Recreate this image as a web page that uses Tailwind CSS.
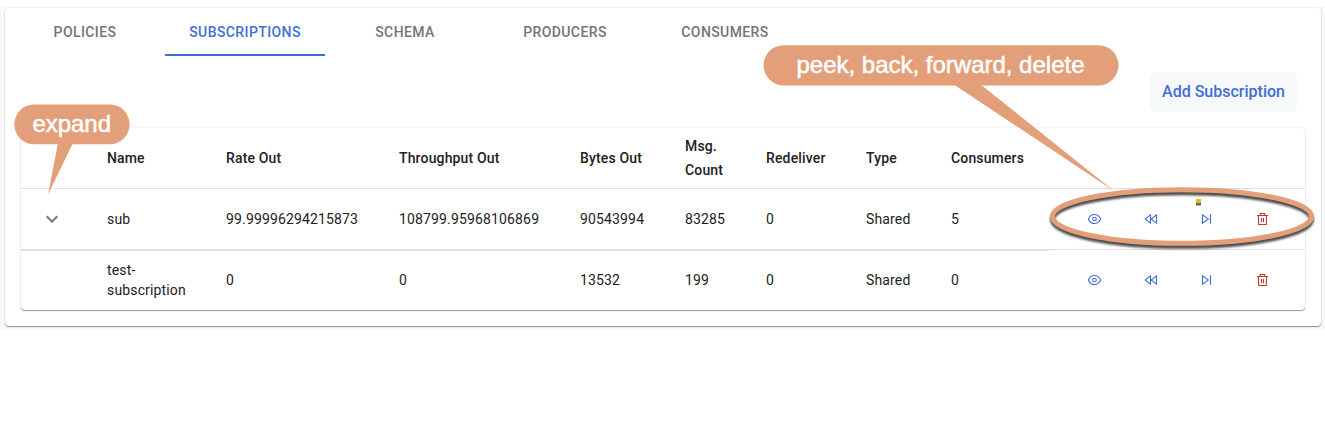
<!DOCTYPE html>
<html lang="en">
<head>
<meta charset="utf-8">
<title>Subscriptions</title>
<script src="https://cdn.jsdelivr.net/npm/@tailwindcss/browser@4"></script>
</head>
<body class="bg-white font-['Roboto',sans-serif] text-[#212121]">
<svg class="hidden">
  <symbol id="eye" viewBox="0 0 14 14"><path d="M.3 7C3.2 1 9.8 1 12.7 7C9.8 13 3.2 13 .3 7Z"/><circle cx="6.500" cy="7" r="1.800"/></symbol>
  <symbol id="back" viewBox="0 0 14 14"><path d="M6.5 2.8V11.2L1.2 7ZM12.5 2.8V11.2L7.2 7Z"/></symbol>
  <symbol id="next" viewBox="0 0 14 14"><path d="M2.5 2.8V11.2L8.4 7ZM10.5 2.3V11.7"/></symbol>
  <symbol id="trash" viewBox="0 0 14 14"><path d="M1 3.5H12M4.2 3.5V1.5H8.8V3.5M2.4 3.5L2.7 12.5H10.3L10.6 3.5M5.5 6V10.2M7.5 6V10.2"/></symbol>
</svg>
<div class="relative h-[423px] w-[1325px] overflow-hidden pt-[7px]">
  <div class="h-[323px] bg-[#f7f8fa] pt-px pr-1 pl-[5px]">
    <main class="h-[318px] rounded bg-white px-4 shadow-[0_1px_1px_rgba(0,0,0,0.4),0_0_2px_rgba(0,0,0,0.14)]">
      <nav class="-mx-4 flex h-12 text-center text-[14px] leading-[48px] font-medium tracking-[0.4px] text-[#757575]">
        <div class="w-40">POLICIES</div>
        <div class="w-40 border-b-2 border-[#3f6fd6] text-[#3f6fd6]">SUBSCRIPTIONS</div>
        <div class="w-40">SCHEMA</div>
        <div class="w-40">PRODUCERS</div>
        <div class="w-40">CONSUMERS</div>
      </nav>
      <div class="flex justify-end pt-4 pr-2 pb-4">
        <button class="h-10 w-[147px] rounded-md bg-[#f7f8fa] text-[16px] leading-10 font-medium text-[#3f6fd6]">Add Subscription</button>
      </div>
      <section class="h-[182px] rounded bg-white text-[14px] leading-5 tracking-[0.15px] shadow-[0_1px_1px_rgba(0,0,0,0.4),0_0_2px_rgba(0,0,0,0.12)]">
        <div class="grid h-[61px] grid-cols-[86px_119px_173px_181px_105px_81px_100px_85px_1fr] items-center border-b border-[#e0e0e0] leading-6 font-medium">
          <div></div><div>Name</div><div>Rate Out</div><div>Throughput Out</div><div>Bytes Out</div><div class="w-12">Msg. Count</div><div>Redeliver</div><div>Type</div><div>Consumers</div>
        </div>
        <div class="flex h-[61px]">
          <div class="grid h-[62px] w-[1028px] shrink-0 grid-cols-[86px_119px_173px_181px_105px_81px_100px_85px_1fr] items-center border-b-2 border-[#e0e0e0]">
            <div class="pl-[19px]"><svg class="size-6" viewBox="0 0 24 24" fill="#757575"><path d="M7.41 8.59 12 13.17l4.59-4.58L18 10l-6 6-6-6 1.41-1.41z"/></svg></div>
            <div>sub</div><div>99.99996294215873</div><div>108799.95968106869</div><div>90543994</div><div>83285</div><div>0</div><div>Shared</div><div>5</div>
          </div>
          <div class="grid h-[61px] w-64 grid-cols-[56px_56px_56px_56px] items-center justify-items-center border-b border-[#e0e0e0] pl-[18px] text-[#3f6fd6]">
            <svg class="size-3.5 fill-none stroke-current stroke-[1.1]"><use href="#eye"/></svg>
            <svg class="size-3.5 fill-none stroke-current stroke-[1.1]"><use href="#back"/></svg>
            <svg class="size-3.5 fill-none stroke-current stroke-[1.1]"><use href="#next"/></svg>
            <svg class="size-3.5 fill-none stroke-[#c0392b] stroke-[1.1]"><use href="#trash"/></svg>
          </div>
        </div>
        <div class="flex h-[60px]">
          <div class="grid h-15 w-[1028px] shrink-0 grid-cols-[86px_119px_173px_181px_105px_81px_100px_85px_1fr] items-center">
            <div></div><div class="w-[87px]">test-<br>subscription</div><div>0</div><div>0</div><div>13532</div><div>199</div><div>0</div><div>Shared</div><div>0</div>
          </div>
          <div class="grid h-15 w-64 grid-cols-[56px_56px_56px_56px] items-center justify-items-center pl-[18px] text-[#3f6fd6]">
            <svg class="size-3.5 fill-none stroke-current stroke-[1.1]"><use href="#eye"/></svg>
            <svg class="size-3.5 fill-none stroke-current stroke-[1.1]"><use href="#back"/></svg>
            <svg class="size-3.5 fill-none stroke-current stroke-[1.1]"><use href="#next"/></svg>
            <svg class="size-3.5 fill-none stroke-[#c0392b] stroke-[1.1]"><use href="#trash"/></svg>
          </div>
        </div>
      </section>
    </main>
  </div>

  <!-- annotation callouts over the table -->
  <svg class="pointer-events-none absolute inset-0" width="1325" height="423" viewBox="0 0 1325 423">
    <defs>
      <filter id="shade" x="-10%" y="-30%" width="120%" height="170%" color-interpolation-filters="sRGB"><feDropShadow dx="0" dy="3" stdDeviation="1" flood-color="#000" flood-opacity=".7"/></filter>
      <filter id="dot" x="-100%" y="-100%" width="300%" height="400%" color-interpolation-filters="sRGB"><feDropShadow dx="0" dy="2.5" stdDeviation=".7" flood-color="#000" flood-opacity=".6"/></filter>
    </defs>
    <g fill="#e39f7a">
      <rect x="14.300" y="104.500" width="115.300" height="39.700" rx="19.800"/>
      <path d="M58 143L48 194.500L73 143Z"/>
      <rect x="763.500" y="45.200" width="355" height="40.300" rx="20.150"/>
      <path d="M953 84L1114 191L980 84Z"/>
    </g>
    <ellipse cx="1182" cy="216.500" rx="129.500" ry="26.800" fill="none" stroke="#e39f7a" stroke-width="5" filter="url(#shade)"/>
    <rect x="1196" y="199" width="5" height="4" fill="#e6b822" filter="url(#dot)"/>
    <g fill="#fff" stroke="#fff" stroke-width=".5" font-family="Liberation Sans, sans-serif" font-size="24">
      <text x="32.500" y="132" textLength="78.500">expand</text>
      <text x="796.500" y="73" textLength="288">peek, back, forward, delete</text>
    </g>
  </svg>
</div>
</body>
</html>
